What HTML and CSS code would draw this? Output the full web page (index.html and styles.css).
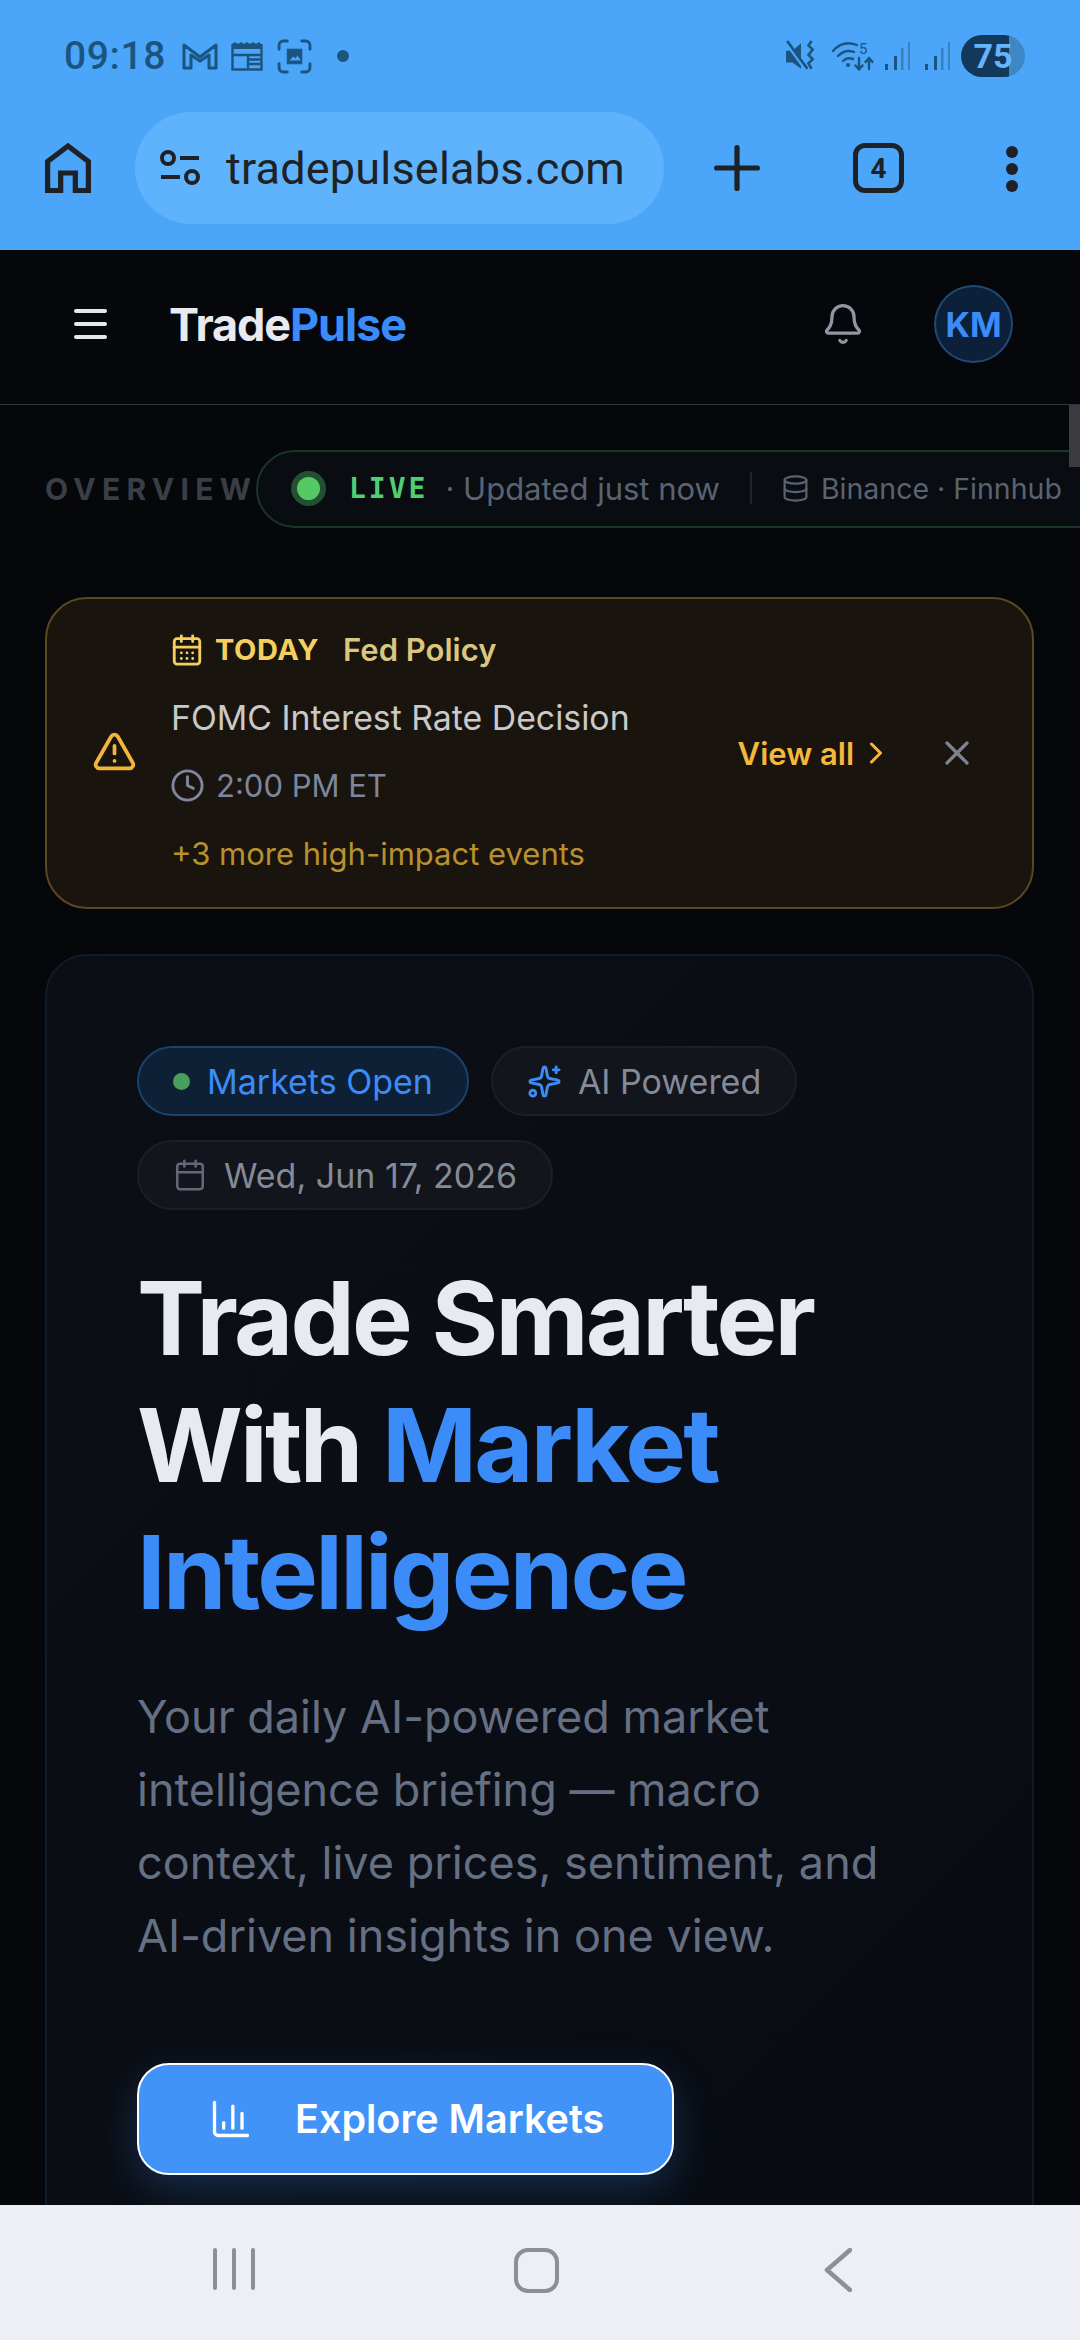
FILE: index.html
```html
<!DOCTYPE html>
<html lang="en">
<head>
  <meta charset="UTF-8">
  <title>TradePulse</title>
  <link rel="stylesheet" href="styles.css">
</head>
<body>
  <div class="phone">
    <div class="status-bar">
      <span class="clock-time">09:18</span>
      <svg class="st-icon st-gmail" viewBox="0 0 36 28" fill="none" stroke="currentColor" stroke-width="3" stroke-linejoin="round"><path d="M2 3l16 12L34 3v23h-7V13l-9 6-9-6v13H2z"/></svg>
      <svg class="st-icon st-news" viewBox="0 0 32 30" fill="none" stroke="currentColor" stroke-width="2.4"><path d="M1.500 3v25.500h29V3"/><path d="M1 3l3-2 3 2 3-2 3 2 3-2 3 2 3-2 3 2 3-2 2 2v5H1z" fill="currentColor" stroke="none"/><path d="M17 14v14M17 14h13M17 18.500h13M17 23h13M1.500 14H17"/></svg>
      <svg class="st-icon st-shot" viewBox="0 0 34 34" fill="none" stroke="currentColor" stroke-width="2.800" stroke-linecap="round"><path d="M2 10V6a4 4 0 0 1 4-4h4M24 2h4a4 4 0 0 1 4 4v4M32 24v4a4 4 0 0 1-4 4h-4M10 32H6a4 4 0 0 1-4-4v-4"/><path d="M10 10h14v14H10z" fill="currentColor" stroke-width="1"/><path d="M12 21l4-4 2 2 2-3 3 5z" fill="#4BA5F9" stroke="none"/></svg>
      <span class="st-dot"></span>
      <span class="st-spacer"></span>
      <svg class="st-icon st-mute" viewBox="0 0 30 30" fill="currentColor"><path d="M1 10h6l8-7v24l-8-6H1z"/><path d="M1 3l19 26" stroke="#4BA5F9" stroke-width="2.500"/><path d="M2 1l19 26" stroke="currentColor" stroke-width="2.500"/><path d="M25 1l-3 4 4 4-4 5 4 4-4 4 3 5" fill="none" stroke="currentColor" stroke-width="2.400"/></svg>
      <svg class="st-icon st-wifi" viewBox="0 0 42 30" fill="none" stroke="currentColor" stroke-width="2.400" stroke-linecap="round"><path d="M1 10C8 2 17 1 25 4M6 15c5-5 11-6 16-4M11 20c3-3 7-3 10-2"/><circle cx="16" cy="24" r="2" fill="currentColor" stroke="none"/><path d="M27 17v11M23.500 24.500L27 28.500l3.500-4M37 28V17M33.500 21l3.500-4 3.500 4"/><text x="27" y="13" class="st-five">5</text></svg>
      <svg class="st-icon st-signal" viewBox="0 0 26 30"><rect x="1" y="23" width="3" height="6" fill="#1c5480"/><rect x="10" y="15" width="3" height="14" fill="#1c5480"/><rect x="17" y="7" width="2.500" height="22" fill="#3a80bd"/><rect x="24" y="1" width="2" height="28" fill="#3a80bd"/></svg>
      <svg class="st-icon st-signal st-signal-two" viewBox="0 0 26 30"><rect x="1" y="23" width="3" height="6" fill="#1c5480"/><rect x="10" y="15" width="3" height="14" fill="#1c5480"/><rect x="17" y="7" width="2.500" height="22" fill="#3a80bd"/><rect x="24" y="1" width="2" height="28" fill="#3a80bd"/></svg>
      <div class="battery"><span class="battery-num">75</span></div>
    </div>

    <div class="toolbar">
      <svg class="tb-home" viewBox="0 0 44 50" preserveAspectRatio="none" fill="none" stroke="#1e2226" stroke-width="5"><path d="M2.500 47.500V18.500L22 3l19.500 15.500v29H29V30H15v17.500z"/></svg>
      <div class="url-pill">
        <svg class="tb-tune" viewBox="0 0 40 36" fill="none" stroke="#1e2226" stroke-width="4"><circle cx="8" cy="8" r="6"/><path d="M20 8h19M1 27h19"/><circle cx="32" cy="27" r="6"/></svg>
        <span class="url-text">tradepulselabs.com</span>
      </div>
      <svg class="tb-plus" viewBox="0 0 44 44" fill="none" stroke="#1e2226" stroke-width="5" stroke-linecap="round"><path d="M22 2.500v39M2.500 22h39"/></svg>
      <div class="tab-count">4</div>
      <div class="tb-menu"><span></span><span></span><span></span></div>
    </div>

    <header class="topnav">
      <div class="burger"><span></span><span></span><span></span></div>
      <div class="logo">Trade<span class="logo-blue">Pulse</span></div>
      <svg class="bell" viewBox="0 0 24 24" fill="none" stroke="currentColor" stroke-width="1.800" stroke-linecap="round" stroke-linejoin="round"><path d="M10.268 21a2 2 0 0 0 3.464 0"/><path d="M3.262 15.326A1 1 0 0 0 4 17h16a1 1 0 0 0 .74-1.673C19.410 13.956 18 12.499 18 8A6 6 0 0 0 6 8c0 4.499-1.411 5.956-2.738 7.326"/></svg>
      <div class="avatar">KM</div>
    </header>

    <main class="content">
      <div class="scroll-thumb"></div>

      <div class="overview-row">
        <span class="overview-label">OVERVIEW</span>
        <div class="live-pill">
          <span class="live-dot"></span>
          <span class="live-text">LIVE</span>
          <span class="live-note">· Updated just now</span>
          <span class="live-div"></span>
          <svg class="db-icon" viewBox="0 0 24 24" fill="none" stroke="currentColor" stroke-width="1.800" stroke-linecap="round" stroke-linejoin="round"><ellipse cx="12" cy="5" rx="9" ry="3"/><path d="M3 5V19A9 3 0 0 0 21 19V5"/><path d="M3 12A9 3 0 0 0 21 12"/></svg>
          <span class="live-source">Binance · Finnhub</span>
        </div>
      </div>

      <section class="alert">
        <svg class="alert-icon" viewBox="0 0 24 24" fill="none" stroke="currentColor" stroke-width="2" stroke-linecap="round" stroke-linejoin="round"><path d="m21.730 18-8-14a2 2 0 0 0-3.480 0l-8 14A2 2 0 0 0 4 21h16a2 2 0 0 0 1.730-3"/><path d="M12 9v4"/><path d="M12 17h.01"/></svg>
        <div class="alert-body">
          <div class="alert-line alert-top">
            <svg class="cal-icon" viewBox="0 0 24 24" fill="none" stroke="currentColor" stroke-width="2" stroke-linecap="round" stroke-linejoin="round"><path d="M8 2v4"/><path d="M16 2v4"/><rect x="3" y="4" width="18" height="18" rx="2"/><path d="M3 10h18"/><path d="M8 14h.01M12 14h.01M16 14h.01M8 18h.01M12 18h.01M16 18h.01"/></svg>
            <span class="today">TODAY</span>
            <span class="fed">Fed Policy</span>
          </div>
          <div class="alert-line alert-title">FOMC Interest Rate Decision</div>
          <div class="alert-line alert-time">
            <svg class="clock-icon" viewBox="0 0 24 24" fill="none" stroke="currentColor" stroke-width="2" stroke-linecap="round" stroke-linejoin="round"><circle cx="12" cy="12" r="10"/><path d="M12 6v6l4 2"/></svg>
            <span>2:00 PM ET</span>
          </div>
          <div class="alert-line alert-more">+3 more high-impact events</div>
        </div>
        <div class="view-all">
          <span>View all</span>
          <svg class="chev" viewBox="0 0 24 24" fill="none" stroke="currentColor" stroke-width="2" stroke-linecap="round" stroke-linejoin="round"><path d="m9 18 6-6-6-6"/></svg>
        </div>
        <svg class="close-x" viewBox="0 0 24 24" fill="none" stroke="currentColor" stroke-width="2" stroke-linecap="round" stroke-linejoin="round"><path d="M18 6 6 18"/><path d="m6 6 12 12"/></svg>
      </section>

      <section class="hero">
        <div class="tags">
          <div class="tag tag-blue"><span class="tag-dot"></span>Markets Open</div>
          <div class="tag">
            <svg class="tag-icon tag-spark" viewBox="0 0 24 24" fill="none" stroke="currentColor" stroke-width="2" stroke-linecap="round" stroke-linejoin="round"><path d="M11.017 2.814a1 1 0 0 1 1.966 0l1.051 5.558a2 2 0 0 0 1.594 1.594l5.558 1.051a1 1 0 0 1 0 1.966l-5.558 1.051a2 2 0 0 0-1.594 1.594l-1.051 5.558a1 1 0 0 1-1.966 0l-1.051-5.558a2 2 0 0 0-1.594-1.594l-5.558-1.051a1 1 0 0 1 0-1.966l5.558-1.051a2 2 0 0 0 1.594-1.594z"/><path d="M20 2v4"/><path d="M22 4h-4"/><circle cx="4" cy="20" r="2"/></svg>
            AI Powered
          </div>
          <div class="tag">
            <svg class="tag-icon" viewBox="0 0 24 24" fill="none" stroke="currentColor" stroke-width="1.800" stroke-linecap="round" stroke-linejoin="round"><path d="M8 2v4"/><path d="M16 2v4"/><rect x="3" y="4" width="18" height="18" rx="2"/><path d="M3 10h18"/></svg>
            Wed, Jun 17, 2026
          </div>
        </div>
        <h1 class="hero-title">Trade Smarter<br>With <span class="hero-blue">Market<br>Intelligence</span></h1>
        <p class="hero-text">Your daily AI-powered market<br>intelligence briefing — macro<br>context, live prices, sentiment, and<br>AI-driven insights in one view.</p>
        <button class="cta">
          <svg class="cta-icon" viewBox="0 0 24 24" fill="none" stroke="currentColor" stroke-width="1.800" stroke-linecap="round" stroke-linejoin="round"><path d="M3 3v16a2 2 0 0 0 2 2h16"/><path d="M18 17V9"/><path d="M13 17V5"/><path d="M8 17v-3"/></svg>
          Explore Markets
        </button>
      </section>
    </main>

    <nav class="sysnav">
      <div class="sys-recent"><span></span><span></span><span></span></div>
      <div class="sys-home"></div>
      <svg class="sys-back" viewBox="0 0 28 44" fill="none" stroke="#8e8f94" stroke-width="4.500" stroke-linecap="round" stroke-linejoin="round"><path d="M26 2 3 22l23 20"/></svg>
    </nav>
  </div>
</body>
</html>
```

FILE: styles.css
```css
* { box-sizing: border-box; }
html, body { margin: 0; padding: 0; background: #05070b; }
body { font-family: Inter, "Noto Sans", sans-serif; }
svg { display: block; flex-shrink: 0; }

.phone { width: 1080px; height: 2340px; display: flex; flex-direction: column; overflow: hidden; }

/* status bar */
.status-bar { height: 112px; background: #4ba5f9; display: flex; align-items: center; padding: 0 55px 0 64px; color: #1c5480; }
.clock-time { font-family: Roboto, sans-serif; font-size: 39px; font-weight: 500; letter-spacing: 0.6px; width: 118px; }
.st-icon { color: #1c5480; }
.st-gmail { width: 36px; height: 28px; }
.st-news { width: 32px; height: 30px; margin-left: 13px; }
.st-shot { width: 35px; height: 35px; margin-left: 14px; }
.st-dot { width: 12px; height: 12px; border-radius: 50%; background: #1c5480; margin-left: 25px; }
.st-spacer { flex: 1; }
.st-mute { width: 32px; height: 32px; }
.st-wifi { width: 44px; height: 30px; margin-left: 14px; }
.st-five { font-family: Roboto, sans-serif; font-size: 15px; fill: currentColor; stroke: none; }
.st-signal { width: 26px; height: 30px; margin-left: 9px; }
.st-signal-two { margin-left: 14px; }
.battery { width: 64px; height: 42px; margin-left: 11px; border-radius: 21px; background: linear-gradient(90deg, #12385c 0, #12385c 48px, #3d87c4 48px); display: flex; align-items: center; justify-content: center; }
.battery-num { font-family: Roboto, sans-serif; font-size: 34px; font-weight: 700; color: #68b4fb; }

/* browser toolbar */
.toolbar { height: 138px; background: #4ba5f9; display: flex; align-items: flex-start; }
.tb-home { width: 46px; height: 50px; margin: 31px 0 0 45px; }
.url-pill { width: 529px; height: 112px; margin-left: 44px; border-radius: 56px; background: #5fb3fc; display: flex; align-items: center; padding-left: 24px; }
.tb-tune { width: 42px; height: 36px; }
.url-text { font-family: Roboto, sans-serif; font-size: 45px; color: #1e2226; margin-left: 25px; letter-spacing: 0.2px; }
.tb-plus { width: 46px; height: 46px; margin: 33px 0 0 50px; }
.tab-count { width: 51px; height: 50px; margin: 31px 0 0 93px; border: 5px solid #1e2226; border-radius: 12px; font-family: Roboto, sans-serif; font-size: 28px; font-weight: 700; color: #1e2226; display: flex; align-items: center; justify-content: center; }
.tb-menu { display: flex; flex-direction: column; gap: 5px; margin: 34px 0 0 102px; }
.tb-menu span { width: 12px; height: 12px; border-radius: 50%; background: #1e2226; }

/* site nav */
.topnav { height: 155px; background: #05070b; border-bottom: 1px solid #31343a; display: flex; align-items: center; padding: 0 67px 6px 74px; }
.burger { width: 33px; display: flex; flex-direction: column; gap: 9px; }
.burger span { height: 4px; border-radius: 2px; background: #e6e8ec; }
.logo { font-size: 45px; font-weight: 700; letter-spacing: -1.100px; color: #e8eaf0; margin-left: 62px; flex: 1; }
.logo-blue { color: #3b8cf8; }
.bell { width: 44px; height: 44px; color: #9196a0; margin-right: 69px; }
.avatar { width: 79px; height: 78px; border-radius: 50%; background: #0c2139; border: 2px solid #1f4a75; color: #3b8cf8; font-size: 34px; font-weight: 700; display: flex; align-items: center; justify-content: center; }

/* page content */
.content { flex: 1; min-height: 0; overflow: hidden; background: #05070b; position: relative; }
.scroll-thumb { position: absolute; top: 0; right: 0; width: 11px; height: 62px; background: #3b3c3f; }

.overview-row { display: flex; align-items: center; padding: 45px 0 0 45px; white-space: nowrap; }
.overview-label { font-size: 30px; font-weight: 700; letter-spacing: 6.300px; color: #3a3e47; width: 211px; flex-shrink: 0; }
.live-pill { height: 78px; flex-shrink: 0; display: flex; align-items: center; padding: 0 60px 2px 39px; border: 2px solid #1b3527; border-radius: 39px; background: #090c11; }
.live-dot { width: 23px; height: 23px; border-radius: 50%; background: #55c964; box-shadow: 0 0 0 6px #235033; }
.live-text { font-family: "DejaVu Sans Mono", monospace; font-size: 28px; font-weight: 700; letter-spacing: 3px; color: #4fcf72; margin-left: 29px; }
.live-note { font-size: 31px; color: #5b6372; margin-left: 17px; }
.live-div { width: 2px; height: 32px; background: #1f242c; margin-left: 30px; }
.db-icon { width: 29px; height: 29px; color: #5b6372; margin-left: 29px; }
.live-source { font-size: 28.500px; color: #5b6372; margin-left: 11px; }

/* economic calendar alert */
.alert { margin: 69px 46px 0 45px; height: 312px; border: 2px solid #5b4820; border-radius: 42px; background: #19140e; display: flex; align-items: center; padding: 0 54px 3px 45px; }
.alert-icon { width: 45px; height: 45px; color: #f2b53c; }
.alert-body { flex: 1; margin-left: 35px; display: flex; flex-direction: column; gap: 24px; }
.alert-line { display: flex; align-items: center; height: 44px; white-space: nowrap; }
.cal-icon { width: 34px; height: 34px; color: #f5d060; margin-left: -2px; }
.today { font-size: 29px; font-weight: 700; letter-spacing: 0.6px; color: #f5d060; margin-left: 11px; }
.fed { font-size: 31px; font-weight: 600; color: #d9c67f; margin-left: 24px; }
.alert-title { font-size: 33.800px; color: #c9c9c9; margin-left: -1px; }
.alert-time { font-size: 31px; color: #7d869c; }
.clock-icon { width: 35px; height: 35px; margin-left: -2px; margin-right: 11px; }
.alert-more { font-size: 31px; color: #b8902e; margin-left: -1px; }
.view-all { display: flex; align-items: center; font-size: 31px; font-weight: 600; color: #f6b73c; padding-top: 3px; }
.chev { width: 36px; height: 36px; margin-left: 4px; }
.close-x { width: 40px; height: 40px; color: #7d8290; margin: 3px 1px 0 43px; }

/* hero card */
.hero { margin: 45px 46px 0 45px; height: 1400px; border: 2px solid #0f1c2a; border-radius: 42px; background: linear-gradient(135deg, #0b0e13 0, #0a0d13 60%, #070b11 100%); padding: 90px 40px 0 90px; }
.tags { display: flex; flex-wrap: wrap; gap: 24px 22px; width: 720px; }
.tag { height: 70px; padding: 0 34px; border: 2px solid #1b1f27; border-radius: 35px; background: #12151b; display: flex; align-items: center; font-size: 34px; color: #858a98; white-space: nowrap; }
.tag-blue { background: #0e2035; border-color: #1a426b; color: #3b8cf8; }
.tag-dot { width: 17px; height: 17px; border-radius: 50%; background: #4a9e5c; margin-right: 17px; }
.tag-icon { width: 34px; height: 34px; margin-right: 17px; color: #636876; }
.tag-spark { width: 35px; height: 35px; color: #3b8cf8; margin-right: 16px; }
.hero-title { margin: 45px 0 0; font-size: 102px; line-height: 127px; font-weight: 700; letter-spacing: -2.750px; color: #e8eaf0; white-space: nowrap; }
.hero-blue { color: #3b8cf8; }
.hero-text { margin: 44px 0 0; font-size: 45px; line-height: 73px; color: #657084; white-space: nowrap; }
.cta { margin-top: 91px; width: 537px; height: 112px; border: 2px solid #fff; border-radius: 32px; background: #4193f7; color: #fff; font-family: Inter, sans-serif; font-size: 39.500px; font-weight: 600; display: flex; align-items: center; padding: 0 0 0 70px; box-shadow: 0 14px 40px rgba(59, 140, 248, 0.25); }
.cta-icon { width: 44px; height: 44px; margin-right: 42px; }

/* android nav */
.sysnav { height: 135px; background: #eeeff4; display: flex; align-items: flex-start; padding-top: 43px; }
.sys-recent { display: flex; gap: 15px; margin-left: 213px; }
.sys-recent span { width: 4px; height: 42px; background: #8e8f94; border-radius: 2px; }
.sys-home { width: 45px; height: 45px; margin-left: 259px; border: 4px solid #8e8f94; border-radius: 14px; }
.sys-back { width: 28px; height: 44px; margin-left: 265px; }
```
